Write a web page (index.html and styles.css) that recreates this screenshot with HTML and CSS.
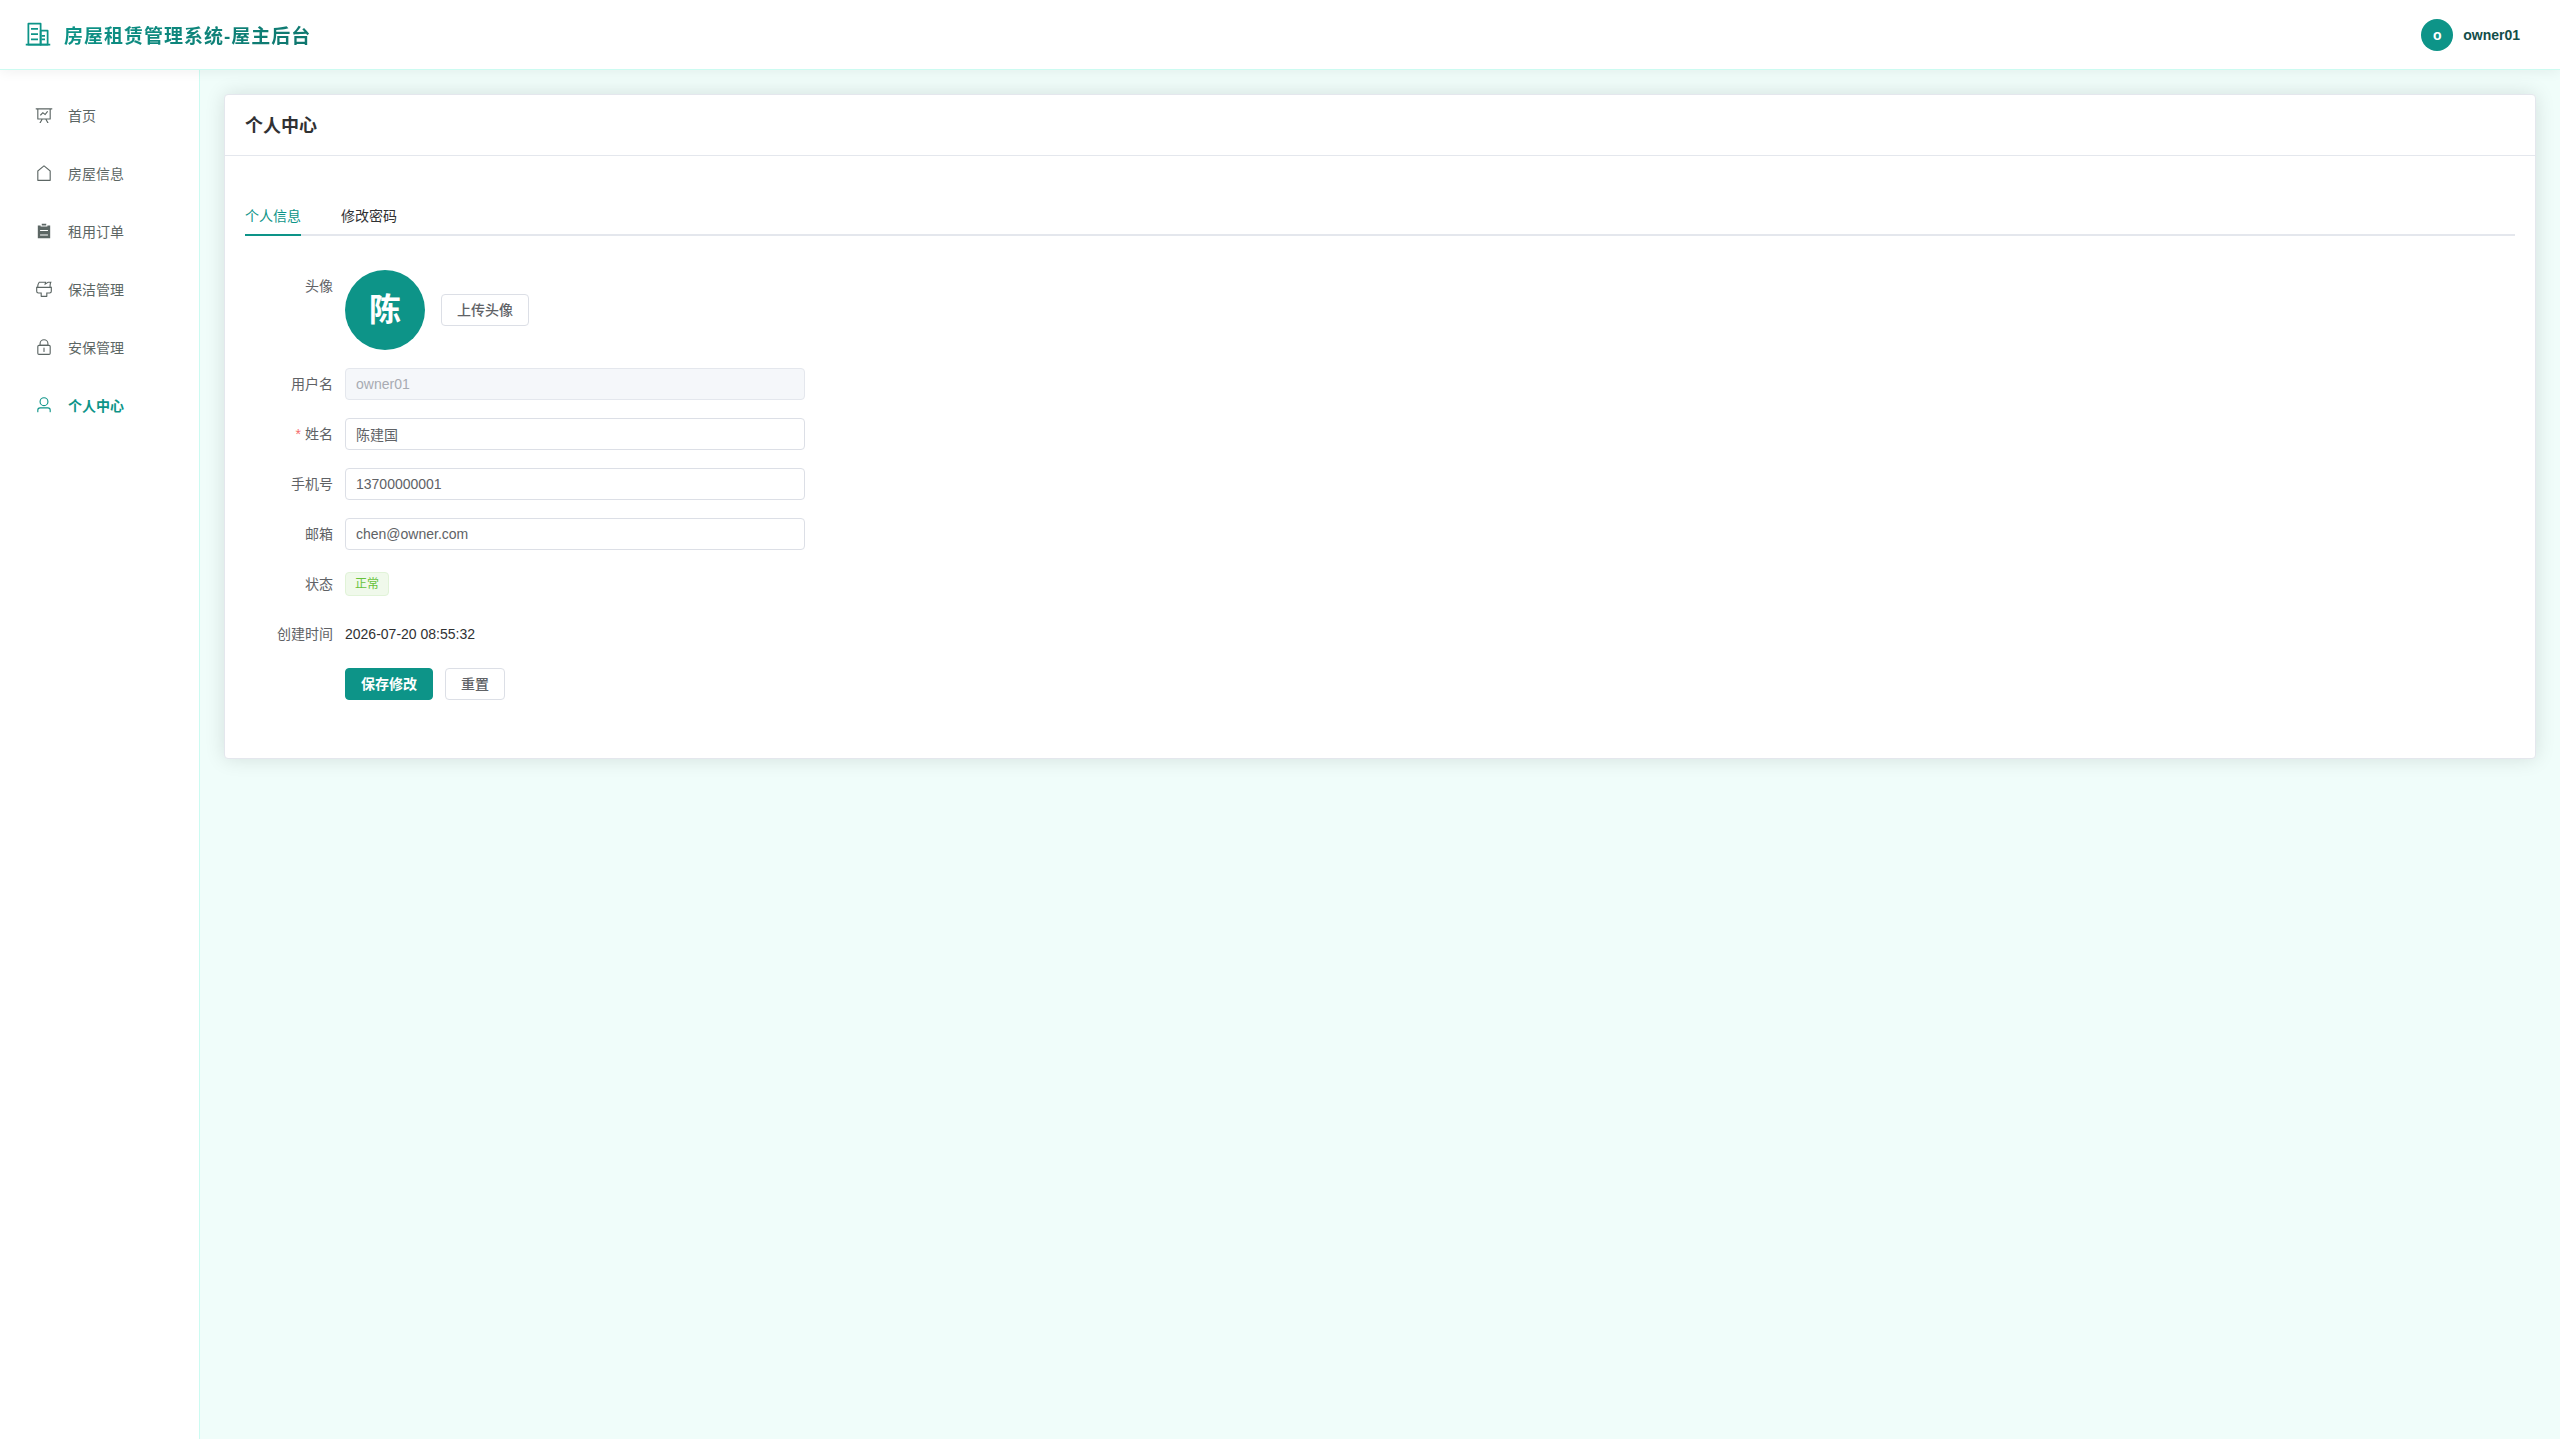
FILE: index.html
```
<!DOCTYPE html>
<html lang="zh-CN">
<head>
  <meta charset="utf-8">
  <meta name="viewport" content="width=device-width, initial-scale=1.0">
  <title>个人中心 - 房屋租赁管理系统</title>
  <link rel="stylesheet" href="styles.css">
</head>
<body>
  <header class="header">
    <div class="logo">
      <svg class="logo-icon" viewBox="0 0 1024 1024"><path d="M192 128v704h384V128zm-32-64h448a32 32 0 0 1 32 32v768a32 32 0 0 1-32 32H160a32 32 0 0 1-32-32V96a32 32 0 0 1 32-32"/><path d="M256 256h256v64H256zm0 192h256v64H256zm0 192h256v64H256zm384-128h128v64H640zm0 128h128v64H640zM64 832h896v64H64z"/><path d="M640 384v448h192V384zm-32-64h256a32 32 0 0 1 32 32v512a32 32 0 0 1-32 32H608a32 32 0 0 1-32-32V352a32 32 0 0 1 32-32"/></svg>
      <span class="logo-text">房屋租赁管理系统-屋主后台</span>
    </div>
    <div class="user">
      <span class="user-avatar">o</span>
      <span class="user-name">owner01</span>
    </div>
  </header>

  <div class="layout">
    <nav class="sidebar">
      <a class="menu-item" href="#home">
        <svg class="menu-icon" viewBox="0 0 1024 1024"><path d="M359.168 768H160a32 32 0 0 1-32-32V192H64a32 32 0 0 1 0-64h896a32 32 0 1 1 0 64h-64v544a32 32 0 0 1-32 32H665.216l110.848 192h-73.856L591.36 768H433.024L322.176 960H248.32zM832 192H192v512h640zM342.656 534.656a32 32 0 1 1-45.312-45.312L444.992 341.76l125.44 94.08L679.04 300.032a32 32 0 1 1 49.92 39.936L581.632 524.224 451.008 426.24 342.656 534.592z"/></svg>
        <span>首页</span>
      </a>
      <a class="menu-item" href="#houses">
        <svg class="menu-icon" viewBox="0 0 1024 1024"><path d="M192 413.952V896h640V413.952L512 147.328zM139.52 374.4l352-293.312a32 32 0 0 1 40.96 0l352 293.312A32 32 0 0 1 896 398.976V928a32 32 0 0 1-32 32H160a32 32 0 0 1-32-32V398.976a32 32 0 0 1 11.52-24.576"/></svg>
        <span>房屋信息</span>
      </a>
      <a class="menu-item" href="#orders">
        <svg class="menu-icon" viewBox="0 0 1024 1024"><path d="M704 192h160v736H160V192h160v64h384zM288 512h448v-64H288zm0 256h448v-64H288zm96-576V96h256v96z"/></svg>
        <span>租用订单</span>
      </a>
      <a class="menu-item" href="#cleaning">
        <svg class="menu-icon" viewBox="0 0 1024 1024"><path d="M896 448H128v192a64 64 0 0 0 64 64h192v192h256V704h192a64 64 0 0 0 64-64zm-770.752-64c0-47.552 5.248-90.24 15.552-128 14.72-54.016 42.496-107.392 83.2-160h417.28l-15.36 70.336L736 96h211.2c-24.832 42.88-41.92 96.256-51.2 160a663.872 663.872 0 0 0-6.144 128H960v256a128 128 0 0 1-128 128H704v160a32 32 0 0 1-32 32H352a32 32 0 0 1-32-32V768H192A128 128 0 0 1 64 640V384h61.248zm64 0h636.544c-2.048-45.824.256-91.584 6.848-137.216 4.48-30.848 10.688-59.776 18.688-86.784h-96.64l-221.12 141.248L561.92 160H256.512c-25.856 37.888-43.776 75.456-53.952 112.832-8.768 32.064-13.248 69.12-13.312 111.168z"/></svg>
        <span>保洁管理</span>
      </a>
      <a class="menu-item" href="#security">
        <svg class="menu-icon" viewBox="0 0 1024 1024"><path d="M224 448a32 32 0 0 0-32 32v384a32 32 0 0 0 32 32h576a32 32 0 0 0 32-32V480a32 32 0 0 0-32-32zm0-64h576a96 96 0 0 1 96 96v384a96 96 0 0 1-96 96H224a96 96 0 0 1-96-96V480a96 96 0 0 1 96-96"/><path d="M512 544a32 32 0 0 1 32 32v192a32 32 0 1 1-64 0V576a32 32 0 0 1 32-32m192-160v-64a192 192 0 1 0-384 0v64zM512 64a256 256 0 0 1 256 256v128H256V320A256 256 0 0 1 512 64"/></svg>
        <span>安保管理</span>
      </a>
      <a class="menu-item active" href="#profile">
        <svg class="menu-icon" viewBox="0 0 1024 1024"><path d="M512 512a192 192 0 1 0 0-384 192 192 0 0 0 0 384m0 64a256 256 0 1 1 0-512 256 256 0 0 1 0 512m320 320v-96a96 96 0 0 0-96-96H288a96 96 0 0 0-96 96v96a32 32 0 1 1-64 0v-96a160 160 0 0 1 160-160h448a160 160 0 0 1 160 160v96a32 32 0 1 1-64 0"/></svg>
        <span>个人中心</span>
      </a>
    </nav>

    <main class="main">
      <section class="card">
        <h1 class="card-header">个人中心</h1>
        <div class="card-body">
          <div class="tabs" role="tablist">
            <button class="tab active" type="button" role="tab" aria-selected="true">个人信息</button>
            <button class="tab" type="button" role="tab" aria-selected="false">修改密码</button>
          </div>

          <form class="form">
            <div class="form-item">
              <span class="form-label">头像</span>
              <div class="avatar-row">
                <span class="avatar">陈</span>
                <button class="btn" type="button">上传头像</button>
              </div>
            </div>
            <div class="form-item">
              <label class="form-label" for="username">用户名</label>
              <input class="input" id="username" type="text" value="owner01" disabled>
            </div>
            <div class="form-item">
              <label class="form-label required" for="name">姓名</label>
              <input class="input" id="name" type="text" value="陈建国">
            </div>
            <div class="form-item">
              <label class="form-label" for="phone">手机号</label>
              <input class="input" id="phone" type="text" value="13700000001">
            </div>
            <div class="form-item">
              <label class="form-label" for="email">邮箱</label>
              <input class="input" id="email" type="text" value="chen@owner.com">
            </div>
            <div class="form-item">
              <span class="form-label">状态</span>
              <span class="tag">正常</span>
            </div>
            <div class="form-item">
              <span class="form-label">创建时间</span>
              <span class="form-text">2026-07-20 08:55:32</span>
            </div>
            <div class="form-item">
              <span class="form-label"></span>
              <div class="actions">
                <button class="btn btn-primary" type="submit">保存修改</button>
                <button class="btn" type="reset">重置</button>
              </div>
            </div>
          </form>
        </div>
      </section>
    </main>
  </div>
</body>
</html>
```

FILE: styles.css
```
* {
  box-sizing: border-box;
}
body {
  margin: 0;
  min-height: 100vh;
  display: flex;
  flex-direction: column;
  font-family: "Liberation Sans", "Noto Sans CJK SC", sans-serif;
  font-size: 14px;
  color: #303133;
  background: #f0fdfa;
}
button, input {
  font-family: inherit;
  font-size: 14px;
}

/* header */
.header {
  position: relative;
  z-index: 1;
  display: flex;
  align-items: center;
  justify-content: space-between;
  height: 70px;
  padding: 0 40px 0 24px;
  background: #fff;
  border-bottom: 1px solid #ccfbf1;
  box-shadow: 0 2px 12px rgba(0, 0, 0, 0.06);
}
.logo {
  display: flex;
  align-items: center;
  gap: 12px;
}
.logo-icon {
  width: 28px;
  height: 28px;
  fill: #0d9488;
}
.logo-text {
  font-size: 19px;
  font-weight: bold;
  letter-spacing: 1px;
  background: linear-gradient(135deg, #0d9488, #0f766e);
  -webkit-background-clip: text;
  background-clip: text;
  color: transparent;
}
.user {
  display: flex;
  align-items: center;
  gap: 10px;
}
.user-avatar {
  width: 32px;
  height: 32px;
  line-height: 32px;
  border-radius: 50%;
  background: #0d9488;
  color: #fff;
  font-weight: bold;
  text-align: center;
}
.user-name {
  font-weight: bold;
  color: #134e4a;
}

/* sidebar */
.layout {
  flex: 1;
  display: flex;
}
.sidebar {
  flex: none;
  width: 200px;
  padding: 20px 12px;
  display: flex;
  flex-direction: column;
  gap: 8px;
  background: #fff;
  border-right: 1px solid #ccfbf1;
}
.menu-item {
  display: flex;
  align-items: center;
  gap: 15px;
  height: 50px;
  padding: 0 23px;
  color: #5c6664;
  text-decoration: none;
}
.menu-item.active {
  color: #0d9488;
  font-weight: bold;
}
.menu-icon {
  width: 18px;
  height: 18px;
  fill: currentColor;
}

/* content */
.main {
  flex: 1;
  padding: 24px;
}
.card {
  background: #fff;
  border: 1px solid #e4e7ed;
  border-radius: 4px;
  box-shadow: 0 0 20px rgba(0, 0, 0, 0.12);
}
.card-header {
  margin: 0;
  padding: 19px 20px 17px;
  font-size: 18px;
  line-height: 24px;
  font-weight: bold;
  border-bottom: 1px solid #e4e7ed;
}
.card-body {
  padding: 40px 20px;
}

.tabs {
  display: flex;
  gap: 40px;
  margin-bottom: 34px;
  box-shadow: inset 0 -2px #e4e7ed;
}
.tab {
  height: 40px;
  padding: 0;
  border: none;
  border-bottom: 2px solid transparent;
  background: none;
  color: #303133;
  cursor: pointer;
}
.tab.active {
  color: #0d9488;
  border-bottom-color: #0d9488;
}

/* form */
.form {
  max-width: 560px;
}
.form-item {
  display: flex;
  align-items: center;
  min-height: 32px;
  margin-bottom: 18px;
}
.form-label {
  flex: none;
  align-self: flex-start;
  width: 100px;
  padding-right: 12px;
  line-height: 32px;
  text-align: right;
  color: #606266;
}
.form-label.required::before {
  content: "*";
  margin-right: 4px;
  color: #f56c6c;
}
.form-text {
  line-height: 32px;
}
.input {
  flex: 1;
  min-width: 0;
  height: 32px;
  padding: 0 10px;
  border: 1px solid #dcdfe6;
  border-radius: 4px;
  background: #fff;
  color: #606266;
}
.input:disabled {
  background: #f5f7fa;
  border-color: #e4e7ed;
  color: #a8abb2;
}
.avatar-row {
  display: flex;
  align-items: center;
  gap: 16px;
}
.avatar {
  width: 80px;
  height: 80px;
  line-height: 80px;
  border-radius: 50%;
  background: #0d9488;
  color: #fff;
  font-size: 32px;
  font-weight: bold;
  text-align: center;
}
.tag {
  height: 24px;
  padding: 0 9px;
  line-height: 22px;
  font-size: 12px;
  color: #67c23a;
  background: #f0f9eb;
  border: 1px solid #e1f3d8;
  border-radius: 4px;
}
.actions {
  display: flex;
  gap: 12px;
}
.btn {
  height: 32px;
  padding: 0 15px;
  line-height: 30px;
  border: 1px solid #dcdfe6;
  border-radius: 4px;
  background: #fff;
  color: #606266;
  font-weight: 500;
  cursor: pointer;
}
.btn-primary {
  background: #0d9488;
  border-color: #0d9488;
  color: #fff;
  font-weight: bold;
}
```
